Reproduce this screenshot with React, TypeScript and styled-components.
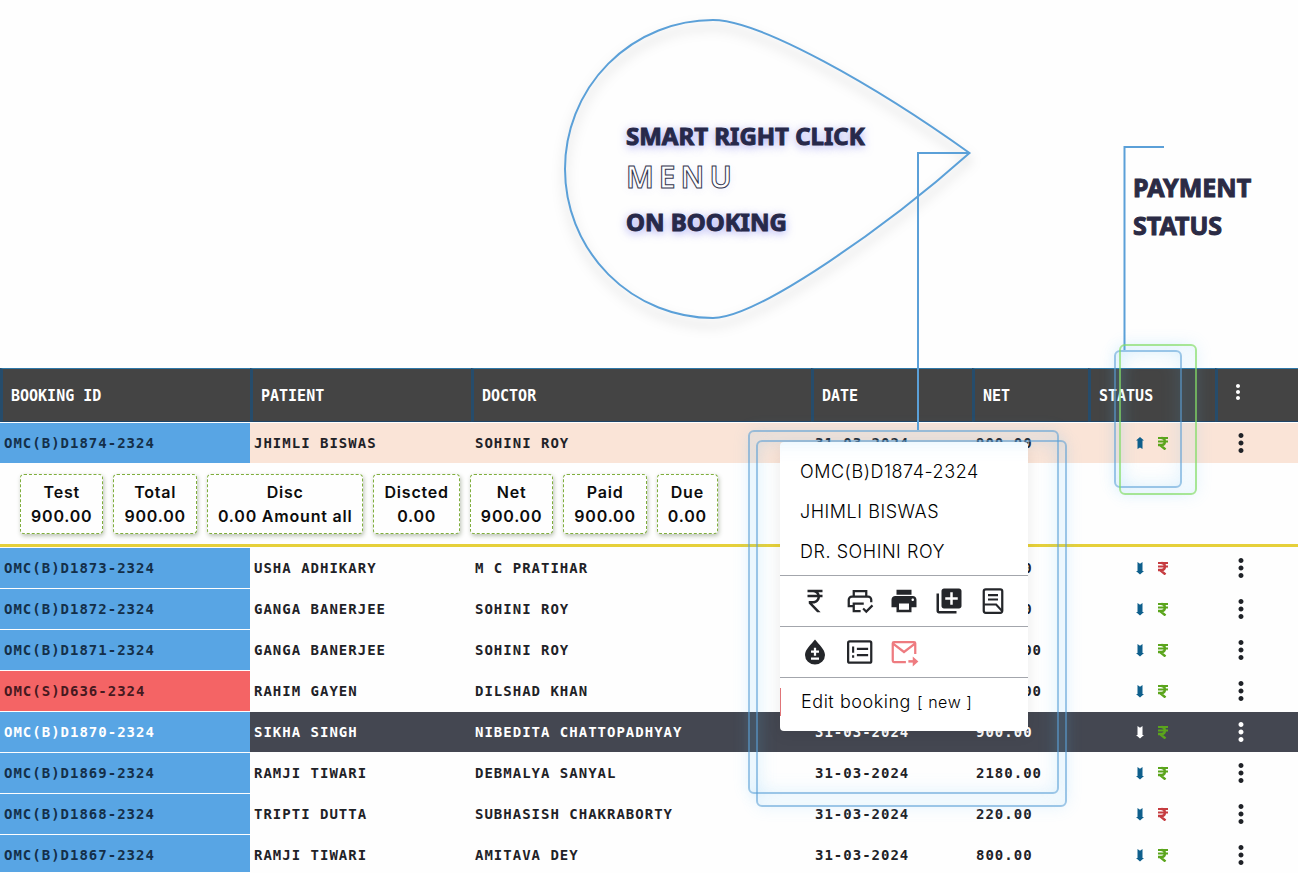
import React from "react";
import styled, { createGlobalStyle } from "styled-components";
import { MdPrint, MdLibraryAdd, MdCurrencyRupee, MdMoreVert } from "react-icons/md";

const GlobalStyle = createGlobalStyle`
  *, *::before, *::after { box-sizing: border-box; }
  body { margin: 0; background: #fefefe; color: #1f2227; }
  button { font: inherit; color: inherit; background: none; border: 0; padding: 0; cursor: pointer; }
`;

const mono = `"DejaVu Sans Mono", monospace`;
const inter = `Inter, "Liberation Sans", sans-serif`;
const display = `"Noto Sans", "Open Sans", sans-serif`;

const Page = styled.main`
  position: relative;
  height: 100vh;
  overflow: hidden;
  border-bottom: 1px solid #fefefe;
`;

const Hero = styled.header`
  display: grid;
  grid-template-columns: 1133px 1fr;
  height: 367px;
`;

const Callout = styled.h1`
  margin: 0;
  padding: 116px 0 0 626px;
  font: 700 24px/40px ${display};
  color: #27294a;
  -webkit-text-stroke: 1px #27294a;
  text-shadow: 0 2px 10px rgba(100, 100, 235, 0.65);
`;

const Line = styled.span`
  display: block;
`;

const OutlineLine = styled(Line)`
  padding-bottom: 4px;
  font-size: 30px;
  line-height: 42px;
  font-weight: 600;
  letter-spacing: 5px;
  color: #fefefe;
  -webkit-text-stroke: 1px #35374f;
  text-shadow: 0 2px 8px rgba(110, 110, 230, 0.12);
`;

const SideNote = styled.h2`
  margin: 0;
  padding-top: 168px;
  font: 700 25px/38px ${display};
  color: #2b2b45;
  -webkit-text-stroke: 1px #2b2b45;
`;

const BookingTable = styled.table`
  width: 100%;
  min-width: 1298px;
  table-layout: fixed;
  border-collapse: separate;
  border-spacing: 0 1px;
`;

const Col = styled.col<{ $w?: number }>`
  ${(p) => (p.$w ? `width: ${p.$w}px;` : "")}
`;

const HeadCell = styled.th`
  height: 54px;
  padding: 2px 8px 0;
  text-align: left;
  font: 700 15px/20px ${mono};
  color: #fff;
  background: #444;
  border-top: 1px solid #2f78a8;
  border-bottom: 1px solid #1f4466;
  border-left: 3px solid #264c6b;
`;

type Tone = "normal" | "open" | "active";

const Row = styled.tr<{ $tone: Tone }>`
  background: ${(p) => ({ normal: "#fefefe", open: "#fae4d7", active: "#444751" })[p.$tone]};
  color: ${(p) => (p.$tone === "active" ? "#fff" : "#1f2227")};
`;

const Cell = styled.td<{ $center?: boolean }>`
  height: 40px;
  padding: 0 4px;
  font: 700 14px/20px ${mono};
  letter-spacing: 1px;
  white-space: nowrap;
  text-align: ${(p) => (p.$center ? "center" : "left")};
`;

const IdCell = styled(Cell)<{ $red?: boolean; $active: boolean }>`
  background: ${(p) => (p.$red ? "#f46465" : "#58a5e4")};
  color: ${(p) => (p.$active ? "#fff" : p.$red ? "#46191f" : "#142f49")};
`;

const StatusIcons = styled.span`
  display: flex;
  align-items: center;
  justify-content: center;
  gap: 14px;
`;

const MoreButton = styled.button`
  display: flex;
  padding: 0 7px;
`;

const HeadMore = styled(MoreButton)`
  padding: 0 0 8px;
`;

const SummaryCell = styled.td`
  height: 83px;
  padding: 10px 20px;
  vertical-align: top;
  border-bottom: 3px solid #e6d03a;
`;

const Summary = styled.dl`
  display: flex;
  gap: 10px;
  margin: 0;
`;

const SummaryCard = styled.div`
  padding: 5px 10px;
  border: 1px dashed #7fae3c;
  border-radius: 4px;
  box-shadow: 1px 2px 4px rgba(60, 80, 40, 0.35);
  font: 600 16px/24px ${inter};
  letter-spacing: 0.05em;
  text-align: center;
  color: #0c0c0c;
  background: #fefefe;
  dt, dd { margin: 0; }
`;

const Menu = styled.div`
  position: absolute;
  left: 780px;
  top: 442px;
  width: 248px;
  background: #fff;
  border-radius: 4px;
  font: 300 18px/24px ${inter};
  letter-spacing: 0.03em;
  color: #000;
  box-shadow: 0 4px 14px rgba(0, 0, 0, 0.08);
`;

const MenuHeading = styled.div`
  padding: 18px 20px 11px;
  p { margin: 0 0 16px; }
  p:last-child { margin-bottom: 0; }
`;

const MenuIcons = styled.div`
  display: grid;
  grid-template-columns: repeat(5, 30px);
  justify-content: space-between;
  align-items: center;
  height: 51px;
  padding: 0 20px;
  border-top: 1px solid #a3a6ac;
  color: #24262a;
`;

const IconButton = styled.button<{ $alert?: boolean }>`
  display: flex;
  color: ${(p) => (p.$alert ? "#ee7b80" : "inherit")};
`;

const MenuFooter = styled.div`
  padding: 10px 0 15px;
  border-top: 1px solid #a3a6ac;
`;

const EditButton = styled.button`
  display: flex;
  gap: 6px;
  width: 100%;
  padding: 2px 20px;
  letter-spacing: 0.03em;
  border-left: 1px solid #e07478;
  small { font-size: 16px; }
`;

const Frame = styled.div<{ $x: number; $y: number; $w: number; $h: number; $green?: boolean }>`
  position: absolute;
  left: ${(p) => p.$x}px;
  top: ${(p) => p.$y}px;
  width: ${(p) => p.$w}px;
  height: ${(p) => p.$h}px;
  border: 2px solid ${(p) => (p.$green ? "rgba(130, 220, 105, 0.7)" : "rgba(90, 160, 215, 0.6)")};
  border-radius: 6px;
  box-shadow: 0 0 16px rgba(100, 190, 250, 0.16), inset 0 0 20px rgba(100, 190, 250, 0.16);
  pointer-events: none;
`;

const Drawing = styled.svg`
  position: absolute;
  left: 0;
  top: 0;
  pointer-events: none;
  fill: none;
  stroke: #5ba0d8;
  stroke-width: 2;
`;

const Drop = styled.path`
  filter: drop-shadow(0 7px 6px rgba(0, 0, 0, 0.26));
`;

const Svg = ({ children }: { children: React.ReactNode }) => (
  <svg width="30" height="30" viewBox="0 0 24 24" fill="none" stroke="currentColor" strokeWidth="2" aria-hidden="true">
    {children}
  </svg>
);

const PrintCheck = () => (
  <Svg>
    <path d="M7 8V4h10v4M6.500 16H3v-5a2.500 2.500 0 0 1 2.500-2.500h13A2.500 2.500 0 0 1 21 11v2M12.500 20H7v-6h8" strokeWidth="1.800" />
    <path d="M14.500 18l2.500 2.500 5-5" strokeWidth="1.700" />
  </Svg>
);

const Receipt = () => (
  <Svg>
    <rect x="4.600" y="2.600" width="14.800" height="18.800" rx="1.600" strokeWidth="1.800" />
    <path d="M8 7.300h8M8 10.800h8M5 14.800h9.500l5 5.500" strokeWidth="1.700" />
  </Svg>
);

const DropPlus = () => (
  <Svg>
    <path d="M12 2C9 6 4 9.800 4 14.400a8 7.600 0 0 0 16 0C20 9.800 15 6 12 2z" fill="currentColor" stroke="none" />
    <path d="M12 8.500v6.500M8.800 11.700h6.400M8.800 17.200h6.400" stroke="#fff" strokeWidth="1.800" />
  </Svg>
);

const NoteList = () => (
  <Svg>
    <rect x="2.500" y="3.500" width="18.500" height="17" rx="1.200" strokeWidth="1.800" />
    <path d="M6.500 7.500v5M6.500 14.500v2M9.500 9.500h9M9.500 14.500h9" strokeWidth="1.700" />
  </Svg>
);

const MailForward = () => (
  <Svg>
    <path d="M13.500 20H4a1 1 0 0 1-1-1V5a1 1 0 0 1 1-1h16a1 1 0 0 1 1 1v8.500M3.500 5.500L12 12l8.500-6.500" strokeWidth="1.800" />
    <path d="M15.500 19.500h4" />
    <path d="M19 15.500l4.500 4-4.500 4z" fill="currentColor" stroke="none" />
  </Svg>
);

const Arrow = ({ up, light }: { up?: boolean; light?: boolean }) => (
  <svg width="8" height="14" viewBox="0 0 8 14" aria-hidden="true">
    <path
      d={up ? "M4 1l4 3.500H6.500V13L4 11.500 1.500 13V4.500H0z" : "M4 13.500L8 10H6.500V1L4 2.800 1.500 1v9H0z"}
      fill={light ? "#fff" : "#0e5f8c"}
    />
  </svg>
);

const Rupee = ({ due }: { due?: boolean }) => (
  <svg width="10" height="14" viewBox="0 0 10 14" fill="none" stroke={due ? "#c63c40" : "#5ba51c"} strokeWidth="2" aria-hidden="true">
    <path d="M0 2h10M0 5.500h10" />
    <path d="M0 9h3.500C8 9 8 2 3.500 2M2 9l5.500 4.500" strokeWidth="2.400" />
  </svg>
);

type Booking = {
  id: string;
  patient: string;
  doctor: string;
  net: string;
  tone?: Tone;
  red?: boolean;
  due?: boolean;
};

const bookings: Booking[] = [
  { id: "OMC(B)D1874-2324", patient: "JHIMLI BISWAS", doctor: "SOHINI ROY", net: "900.00", tone: "open" },
  { id: "OMC(B)D1873-2324", patient: "USHA ADHIKARY", doctor: "M C PRATIHAR", net: "900.00", due: true },
  { id: "OMC(B)D1872-2324", patient: "GANGA BANERJEE", doctor: "SOHINI ROY", net: "900.00" },
  { id: "OMC(B)D1871-2324", patient: "GANGA BANERJEE", doctor: "SOHINI ROY", net: "1500.00" },
  { id: "OMC(S)D636-2324", patient: "RAHIM GAYEN", doctor: "DILSHAD KHAN", net: "1500.00", red: true },
  { id: "OMC(B)D1870-2324", patient: "SIKHA SINGH", doctor: "NIBEDITA CHATTOPADHYAY", net: "900.00", tone: "active" },
  { id: "OMC(B)D1869-2324", patient: "RAMJI TIWARI", doctor: "DEBMALYA SANYAL", net: "2180.00" },
  { id: "OMC(B)D1868-2324", patient: "TRIPTI DUTTA", doctor: "SUBHASISH CHAKRABORTY", net: "220.00", due: true },
  { id: "OMC(B)D1867-2324", patient: "RAMJI TIWARI", doctor: "AMITAVA DEY", net: "800.00" },
];

const summary = [
  ["Test", "900.00"],
  ["Total", "900.00"],
  ["Disc", "0.00 Amount all"],
  ["Discted", "0.00"],
  ["Net", "900.00"],
  ["Paid", "900.00"],
  ["Due", "0.00"],
];

const BookingRow = ({ b }: { b: Booking }) => {
  const tone = b.tone ?? "normal";
  return (
    <Row $tone={tone}>
      <IdCell $red={b.red} $active={tone === "active"}>{b.id}</IdCell>
      <Cell>{b.patient}</Cell>
      <Cell>{b.doctor}</Cell>
      <Cell>31-03-2024</Cell>
      <Cell>{b.net}</Cell>
      <Cell $center>
        <StatusIcons>
          <Arrow up={tone === "open"} light={tone === "active"} />
          <Rupee due={b.due} />
        </StatusIcons>
      </Cell>
      <Cell>
        <MoreButton aria-label={`Actions for ${b.id}`}><MdMoreVert size={30} /></MoreButton>
      </Cell>
    </Row>
  );
};

export default function App() {
  return (
    <Page>
      <GlobalStyle />
      <Hero>
        <Callout>
          <Line>SMART RIGHT CLICK</Line>
          <OutlineLine>MENU</OutlineLine>
          <Line>ON BOOKING</Line>
        </Callout>
        <SideNote>
          <Line>PAYMENT</Line>
          <Line>STATUS</Line>
        </SideNote>
      </Hero>

      <BookingTable>
        <colgroup>
          <Col $w={250} />
          <Col $w={221} />
          <Col $w={340} />
          <Col $w={161} />
          <Col $w={116} />
          <Col $w={127} />
          <Col />
        </colgroup>
        <thead>
          <tr>
            <HeadCell>BOOKING ID</HeadCell>
            <HeadCell>PATIENT</HeadCell>
            <HeadCell>DOCTOR</HeadCell>
            <HeadCell>DATE</HeadCell>
            <HeadCell>NET</HeadCell>
            <HeadCell>STATUS</HeadCell>
            <HeadCell>
              <HeadMore aria-label="Table options"><MdMoreVert size={24} /></HeadMore>
            </HeadCell>
          </tr>
        </thead>
        <tbody>
          <BookingRow b={bookings[0]} />
          <tr>
            <SummaryCell colSpan={7}>
              <Summary>
                {summary.map(([label, value]) => (
                  <SummaryCard key={label}>
                    <dt>{label}</dt>
                    <dd>{value}</dd>
                  </SummaryCard>
                ))}
              </Summary>
            </SummaryCell>
          </tr>
          {bookings.slice(1).map((b) => (
            <BookingRow key={b.id} b={b} />
          ))}
        </tbody>
      </BookingTable>

      <Menu>
        <MenuHeading>
          <p>OMC(B)D1874-2324</p>
          <p>JHIMLI BISWAS</p>
          <p>DR. SOHINI ROY</p>
        </MenuHeading>
        <MenuIcons>
          <IconButton aria-label="Payment"><MdCurrencyRupee size={30} /></IconButton>
          <IconButton aria-label="Print status"><PrintCheck /></IconButton>
          <IconButton aria-label="Print"><MdPrint size={30} /></IconButton>
          <IconButton aria-label="Add test"><MdLibraryAdd size={30} /></IconButton>
          <IconButton aria-label="Receipt"><Receipt /></IconButton>
        </MenuIcons>
        <MenuIcons>
          <IconButton aria-label="Sample"><DropPlus /></IconButton>
          <IconButton aria-label="Notes"><NoteList /></IconButton>
          <IconButton aria-label="Send mail" $alert><MailForward /></IconButton>
        </MenuIcons>
        <MenuFooter>
          <EditButton>
            <span>Edit booking</span>
            <small>[ new ]</small>
          </EditButton>
        </MenuFooter>
      </Menu>

      <Drawing width="1298" height="440" viewBox="0 0 1298 440" aria-hidden="true">
        <Drop d="M969.500 153C876 86 760 20 713 20A148 149 0 0 0 713 318C758 318 890 224 969.500 153z" />
        <path d="M969 153H918V430M1164 147H1124.500V350" />
      </Drawing>
      <Frame $x={748} $y={430} $w={311} $h={364} />
      <Frame $x={756} $y={440} $w={311} $h={367} />
      <Frame $x={1114} $y={350} $w={68} $h={138} />
      <Frame $x={1119} $y={344} $w={78} $h={151} $green />
    </Page>
  );
}
